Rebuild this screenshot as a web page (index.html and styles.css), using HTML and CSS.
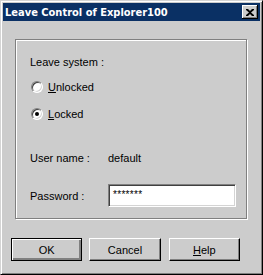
FILE: index.html
```html
<!DOCTYPE html>
<html>
<head>
<meta charset="utf-8">
<link rel="stylesheet" href="styles.css">
</head>
<body>
<div class="window">
  <div class="titlebar">
    <span class="title">Leave Control of Explorer100</span>
    <div class="close">
      <svg width="8" height="7" viewBox="0 0 8 7"><path d="M0 0h2l2 2 2-2h2v1L5 3.5 8 6v1H6L4 5 2 7H0V6l3-2.5L0 1z" fill="#000"/></svg>
    </div>
  </div>
  <div class="content">
    <div class="group">
      <div class="row label-row">Leave system :</div>
      <div class="row radio-row r1"><span class="radio"></span><span><u>U</u>nlocked</span></div>
      <div class="row radio-row r2"><span class="radio checked"></span><span><u>L</u>ocked</span></div>
      <div class="row field-row r3"><span class="flabel">User name :</span><span>default</span></div>
      <div class="row field-row r4"><span class="flabel">Password :</span><div class="textbox">*******</div></div>
    </div>
    <div class="buttons">
      <div class="btn default"><span>OK</span></div>
      <div class="btn"><span>Cancel</span></div>
      <div class="btn help"><span><u>H</u>elp</span></div>
    </div>
  </div>
</div>
</body>
</html>
```

FILE: styles.css
```css
html, body {
  margin: 0;
  padding: 0;
  background: #cccccc;
}
.window {
  width: 263px;
  height: 275px;
  box-sizing: border-box;
  background: #cccccc;
  border: 1px solid;
  border-color: #d4d4d4 #000000 #000000 #d4d4d4;
  box-shadow: inset 1px 1px 0 #ffffff, inset -1px -1px 0 #808080;
  padding: 2px;
  display: flex;
  flex-direction: column;
  font-family: "Liberation Sans", Arial, sans-serif;
  font-size: 11px;
  color: #000;
}
.titlebar {
  height: 18px;
  background: #0a3064;
  display: flex;
  align-items: center;
  justify-content: space-between;
  padding: 0 2px 0 2px;
}
.title {
  color: #fff;
  font-family: "DejaVu Sans Condensed", "DejaVu Sans", sans-serif;
  font-weight: bold;
  font-size: 11px;
}
.close {
  width: 16px;
  height: 14px;
  box-sizing: border-box;
  background: #cccccc;
  box-shadow: inset -1px -1px 0 #000, inset 1px 1px 0 #fff, inset -2px -2px 0 #808080;
  display: flex;
  align-items: center;
  justify-content: center;
}
.close svg { display: block; margin-left: -1px; }
.content {
  flex: 1;
  display: flex;
  flex-direction: column;
  padding: 18px 13px 0 12px;
}
.group {
  height: 180px;
  box-sizing: border-box;
  border: 1px solid #808080;
  box-shadow: 1px 1px 0 #ffffff, inset 1px 1px 0 #ffffff;
  padding: 15px 0 0 14px;
  display: flex;
  flex-direction: column;
}
.row {
  display: flex;
  align-items: center;
  height: 14px;
}
.r1 { margin-top: 11px; }
.r2 { margin-top: 13px; }
.r3 { margin-top: 30px; }
.r4 { margin-top: 19px; height: 23px; }
.radio-row { padding-left: 1px; }
.radio {
  width: 12px;
  height: 12px;
  box-sizing: border-box;
  border-radius: 50%;
  border: 1px solid;
  border-color: #808080 #ffffff #ffffff #808080;
  box-shadow: inset 1px 1px 0 #404040, inset -1px -1px 0 #d4d4d4;
  background: #fff;
  margin-right: 5px;
  display: flex;
  align-items: center;
  justify-content: center;
}
.radio.checked::after {
  content: "";
  width: 4px;
  height: 4px;
  border-radius: 50%;
  background: #000;
}
.flabel {
  width: 78px;
}
.textbox {
  width: 128px;
  height: 23px;
  box-sizing: border-box;
  background: #fff;
  border: 1px solid;
  border-color: #808080 #ffffff #ffffff #808080;
  box-shadow: inset 1px 1px 0 #404040, inset -1px -1px 0 #d4d4d4;
  padding: 4px 4px;
  line-height: 12px;
  font-size: 10px;
  letter-spacing: 0.3px;
}
.buttons {
  display: flex;
  margin-top: 19px;
  margin-left: -4px;
}
.btn {
  width: 75px;
  height: 23px;
  box-sizing: border-box;
  border: 1px solid;
  border-color: #ffffff #000000 #000000 #ffffff;
  box-shadow: inset -1px -1px 0 #808080;
  display: flex;
  align-items: center;
  justify-content: center;
  margin-right: 7px;
  font-size: 11px;
}
.btn.default {
  border: 1px solid #000;
  box-shadow: inset 1px 1px 0 #fff, inset -2px -2px 0 #808080, inset -1px -1px 0 #000;
}
.btn.help { margin-left: 1px; }
```
